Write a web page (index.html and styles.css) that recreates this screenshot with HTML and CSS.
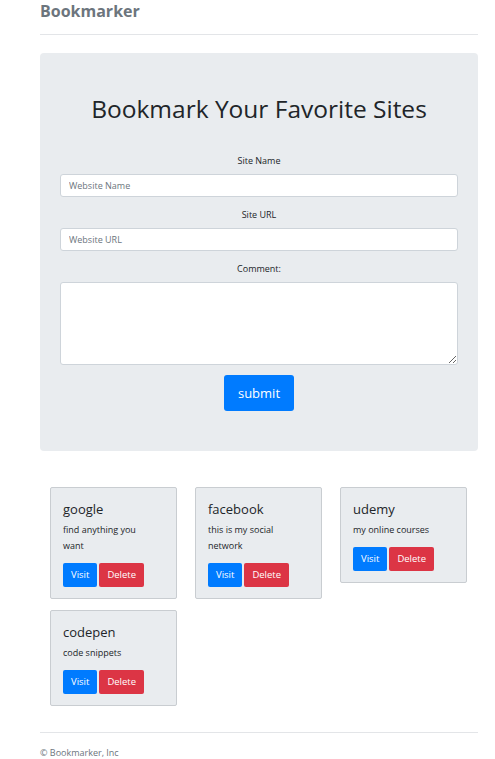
FILE: index.html
```html
<!DOCTYPE html>
<html>
<head>
<meta charset="utf-8">
<link rel="stylesheet" href="styles.css">
</head>
<body>
<div class="container">
  <header class="top">
    <h3 class="brand">Bookmarker</h3>
  </header>
  <div class="jumbo">
    <h1 class="title">Bookmark Your Favorite Sites</h1>
    <form class="form">
      <label class="lbl">Site Name</label>
      <input class="field" type="text" placeholder="Website Name">
      <label class="lbl">Site URL</label>
      <input class="field" type="text" placeholder="Website URL">
      <label class="lbl">Comment:</label>
      <textarea class="field area"></textarea>
      <button class="submit" type="button">submit</button>
    </form>
  </div>
  <div class="cards">
    <div class="card">
      <h3 class="card-title">google</h3>
      <p class="card-text">find anything you want</p>
      <div class="btns"><a class="btn visit">Visit</a><a class="btn del">Delete</a></div>
    </div>
    <div class="card">
      <h3 class="card-title">facebook</h3>
      <p class="card-text">this is my social network</p>
      <div class="btns"><a class="btn visit">Visit</a><a class="btn del">Delete</a></div>
    </div>
    <div class="card">
      <h3 class="card-title">udemy</h3>
      <p class="card-text">my online courses</p>
      <div class="btns"><a class="btn visit">Visit</a><a class="btn del">Delete</a></div>
    </div>
    <div class="card">
      <h3 class="card-title">codepen</h3>
      <p class="card-text">code snippets</p>
      <div class="btns"><a class="btn visit">Visit</a><a class="btn del">Delete</a></div>
    </div>
  </div>
  <footer class="foot">
    <p class="copy">© Bookmarker, Inc</p>
  </footer>
</div>
</body>
</html>
```
FILE: styles.css
```css
* { box-sizing: border-box; }
body {
  margin: 0;
  font-family: "Open Sans", "Noto Sans", sans-serif;
  color: #212529;
  background: #fff;
}
.container {
  margin-left: 40px;
  width: 438px;
}
.top {
  border-bottom: 1px solid #e3e5e8;
  height: 35px;
}
.brand {
  margin: 0;
  padding-top: 1px;
  font-size: 16px;
  font-weight: 700;
  color: #6c757d;
  line-height: 20px;
}
.jumbo {
  margin-top: 18px;
  background: #e9ecef;
  border-radius: 4px;
  height: 398px;
  padding: 38px 20px 0;
}
.title {
  margin: 0;
  text-align: center;
  font-size: 24.5px;
  font-weight: 400;
  line-height: 36px;
}
.form {
  margin-top: 23px;
  display: flex;
  flex-direction: column;
  align-items: center;
}
.lbl {
  font-size: 9px;
  line-height: 12px;
  margin: 5px 0 7px;
}
.field {
  width: 100%;
  height: 23px;
  border: 1px solid #ced4da;
  border-radius: 3px;
  background: #fff;
  font-family: inherit;
  font-size: 9px;
  padding: 0 8px;
  margin-bottom: 7px;
}
.field::placeholder { color: #6c757d; }
.area {
  height: 83px;
  resize: vertical;
  margin-bottom: 10px;
}
.submit {
  width: 70px;
  height: 36px;
  border: none;
  border-radius: 3px;
  background: #007bff;
  color: #fff;
  font-family: inherit;
  font-size: 13px;
}
.cards {
  display: flex;
  flex-wrap: wrap;
  align-items: flex-start;
  align-content: flex-start;
  gap: 11px 18px;
  padding: 36px 10px 0;
  height: 281px;
}
.card {
  width: 127px;
  background: #e9ecef;
  border: 1px solid #c9cdd1;
  border-radius: 2px;
  padding: 12px 20px 11px 12px;
}
.card-title {
  margin: 0;
  font-size: 13px;
  font-weight: 400;
  line-height: 18px;
}
.card-text {
  margin: 4px 0 9px;
  font-size: 9px;
  line-height: 16px;
}
.btns {
  display: flex;
  gap: 2px;
}
.btn {
  height: 24px;
  padding: 0 8px;
  border-radius: 2px;
  color: #fff;
  font-size: 9.5px;
  line-height: 24px;
}
.visit { background: #007bff; }
.del { background: #dc3545; }
.foot {
  border-top: 1px solid #e3e5e8;
}
.copy {
  margin: 13px 0 0;
  font-size: 9px;
  color: #6c757d;
}
```
